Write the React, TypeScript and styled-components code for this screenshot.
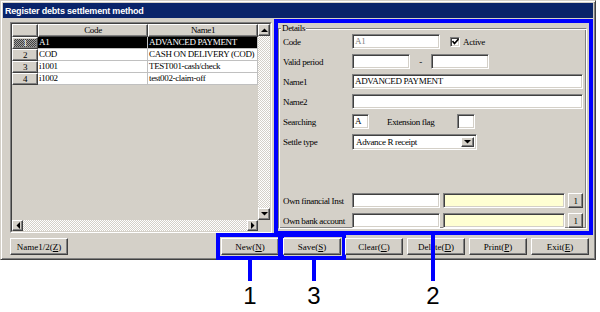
import React from 'react';
import styled, { createGlobalStyle, css } from 'styled-components';

const face = '#d4d0c8';

const GlobalStyle = createGlobalStyle`
	html, body {
		margin: 0;
		padding: 0;
		background: #ffffff;
	}
`;

const raised = css`
	border: 1px solid;
	border-color: #ffffff #404040 #404040 #ffffff;
	box-shadow: inset -1px -1px #808080, inset 1px 1px ${face};
`;

const sunken = css`
	border: 1px solid;
	border-color: #808080 #ffffff #ffffff #808080;
	box-shadow: inset 1px 1px #404040, inset -1px -1px ${face};
`;

const rows = [
	{ no: 1, code: 'A1', name: 'ADVANCED PAYMENT' },
	{ no: 2, code: 'COD', name: 'CASH ON DELIVERY (COD)' },
	{ no: 3, code: 'i1001', name: 'TEST001-cash/check' },
	{ no: 4, code: 'i1002', name: 'test002-claim-off' },
];

const actions = [
	{ label: 'New', key: 'N', marked: true },
	{ label: 'Save', key: 'S', marked: true },
	{ label: 'Clear', key: 'C', marked: false },
	{ label: 'Delete', key: 'D', marked: false },
	{ label: 'Print', key: 'P', marked: false },
	{ label: 'Exit', key: 'E', marked: false },
];

// annotation markers under the window: centre x, top of stem, stem length
const callouts = [
	{ n: '1', x: 250, top: 260, len: 21 },
	{ n: '3', x: 314, top: 260, len: 21 },
	{ n: '2', x: 433, top: 235, len: 46 },
];

function Arrow({ dir }: { dir: 'up' | 'down' | 'left' | 'right' }) {
	const points = {
		up: '0,4 7,4 3.5,0.5',
		down: '0,0 7,0 3.5,3.5',
		left: '4,0 4,7 0.5,3.5',
		right: '0,0 0,7 3.5,3.5',
	}[dir];
	const vertical = dir === 'up' || dir === 'down';
	return (
		<svg width={vertical ? 7 : 4} height={vertical ? 4 : 7}>
			<polygon points={points} fill="#000000" />
		</svg>
	);
}

function Field({ label, children, push }: { label: string; children: React.ReactNode; push?: boolean }) {
	return (
		<FormRow $push={push}>
			<Label>{label}</Label>
			{children}
		</FormRow>
	);
}

export default function App() {
	return (
		<Page>
			<GlobalStyle />
			<Window>
				<TitleBar>Register debts settlement method</TitleBar>
				<Body>
					<TopArea>
						<GridFrame>
							<GridInner>
								<GridMain>
									<Sheet>
										<SheetRow>
											<HeadCorner />
											<HeadCell>Code</HeadCell>
											<HeadCell>Name1</HeadCell>
										</SheetRow>
										{rows.map((r) => (
											<SheetRow key={r.no}>
												<RowHead $selected={r.no === 1}>{r.no}</RowHead>
												<DataCell $selected={r.no === 1}>{r.code}</DataCell>
												<DataCell $selected={r.no === 1}>{r.name}</DataCell>
											</SheetRow>
										))}
									</Sheet>
									<VScroll>
										<ScrollButton>
											<Arrow dir="up" />
										</ScrollButton>
										<Track />
										<ScrollButton>
											<Arrow dir="down" />
										</ScrollButton>
									</VScroll>
								</GridMain>
								<HScrollRow>
									<ScrollButton $narrow>
										<Arrow dir="left" />
									</ScrollButton>
									<Track />
									<ScrollButton $narrow>
										<Arrow dir="right" />
									</ScrollButton>
									<Corner />
								</HScrollRow>
							</GridInner>
						</GridFrame>

						<Panel>
							<GroupBox>
								<Legend>Details</Legend>
								<Field label="Code">
									<TextBox $w={88} $dim>
										A1
									</TextBox>
									<CheckGroup>
										<CheckBox>
											<svg width="7" height="7">
												<polyline points="0.5,3 2.5,5.5 6.5,1" fill="none" stroke="#000" strokeWidth="1.6" />
											</svg>
										</CheckBox>
										Active
									</CheckGroup>
								</Field>
								<Field label="Valid period">
									<TextBox $w={58} />
									<Dash>-</Dash>
									<TextBox $w={58} />
								</Field>
								<Field label="Name1">
									<TextBox $w={231}>ADVANCED PAYMENT</TextBox>
								</Field>
								<Field label="Name2">
									<TextBox $w={231} />
								</Field>
								<Field label="Searching">
									<TextBox $w={17}>A</TextBox>
									<InlineLabel>Extension flag</InlineLabel>
									<TextBox $w={18} />
								</Field>
								<Field label="Settle type">
									<Combo>
										<ComboText>Advance R receipt</ComboText>
										<DropButton>
											<Arrow dir="down" />
										</DropButton>
									</Combo>
								</Field>
								<Field label="Own financial Inst" push>
									<TextBox $w={88} />
									<TextBox $w={122} $yellow />
									<SmallButton>1</SmallButton>
								</Field>
								<Field label="Own bank account">
									<TextBox $w={88} />
									<TextBox $w={122} $yellow />
									<SmallButton>1</SmallButton>
								</Field>
							</GroupBox>
						</Panel>
					</TopArea>

					<ButtonRow>
						<Button>
							Name1/2(<u>Z</u>)
						</Button>
						<ActionGroup>
							{actions.map((a) => (
								<Button key={a.key} $marked={a.marked}>
									{a.label}(<u>{a.key}</u>)
								</Button>
							))}
						</ActionGroup>
					</ButtonRow>
				</Body>
			</Window>

			{callouts.map((c) => (
				<Callout key={c.n} $x={c.x} $top={c.top}>
					<Stem $len={c.len} />
					<Number>{c.n}</Number>
				</Callout>
			))}
		</Page>
	);
}

const Page = styled.div`
	position: relative;
	width: 600px;
	height: 312px;
	overflow: hidden;
	background: #ffffff;
	font-family: 'Liberation Serif', 'Times New Roman', serif;
	font-size: 9px;
	letter-spacing: -0.35px;
	color: #000000;
`;

const Window = styled.div`
	box-sizing: border-box;
	width: 596px;
	height: 260px;
	padding: 2px;
	display: flex;
	flex-direction: column;
	background: ${face};
	border: 1px solid;
	border-color: ${face} #404040 #404040 ${face};
	box-shadow: inset 1px 1px #ffffff, inset -1px -1px #808080;
`;

const TitleBar = styled.div`
	height: 15px;
	display: flex;
	align-items: center;
	padding-left: 2px;
	background: #0a246a;
	color: #ffffff;
	font-family: 'Liberation Sans', Arial, sans-serif;
	font-weight: bold;
	font-size: 9px;
	letter-spacing: -0.2px;
`;

const Body = styled.div`
	flex: 1;
	display: flex;
	flex-direction: column;
	padding: 4px 4px 2px 7px;
`;

const TopArea = styled.div`
	display: flex;
	gap: 6px;
	height: 211px;
`;

/* grid */

const GridFrame = styled.div`
	box-sizing: border-box;
	width: 262px;
	height: 211px;
	border: 1px solid;
	border-color: #808080 #ffffff #ffffff #808080;
`;

const GridInner = styled.div`
	box-sizing: border-box;
	height: 100%;
	display: flex;
	flex-direction: column;
	border: 1px solid;
	border-color: #404040 ${face} ${face} #404040;
`;

const GridMain = styled.div`
	flex: 1;
	display: flex;
	min-height: 0;
`;

const Sheet = styled.div`
	flex: 1;
	display: flex;
	flex-direction: column;
	background: ${face};
`;

const SheetRow = styled.div`
	display: flex;
`;

const HeadCorner = styled.div`
	box-sizing: border-box;
	width: 26px;
	height: 13px;
	background: ${face};
	${raised};
`;

const HeadCell = styled.div`
	box-sizing: border-box;
	width: 110px;
	height: 13px;
	line-height: 11px;
	text-align: center;
	background: ${face};
	${raised};
`;

const RowHead = styled.div<{ $selected?: boolean }>`
	box-sizing: border-box;
	width: 26px;
	height: 12px;
	line-height: 10px;
	text-align: center;
	${raised};
	background: ${(p) =>
		p.$selected
			? 'repeating-conic-gradient(#404040 0 25%, #a0a0a0 0 50%) 0 0 / 2px 2px'
			: face};
	color: ${(p) => (p.$selected ? '#ffffff' : '#000000')};
`;

const DataCell = styled.div<{ $selected?: boolean }>`
	box-sizing: border-box;
	width: 110px;
	height: 12px;
	line-height: 11px;
	padding-left: 1px;
	white-space: nowrap;
	overflow: hidden;
	border-right: 1px solid #c0c0c0;
	border-bottom: 1px solid #c0c0c0;
	background: ${(p) => (p.$selected ? '#000000' : '#ffffff')};
	color: ${(p) => (p.$selected ? '#ffffff' : '#000000')};
`;

const VScroll = styled.div`
	width: 12px;
	display: flex;
	flex-direction: column;
`;

const HScrollRow = styled.div`
	height: 11px;
	display: flex;
`;

const ScrollButton = styled.div<{ $narrow?: boolean }>`
	box-sizing: border-box;
	width: ${(p) => (p.$narrow ? 11 : 12)}px;
	height: ${(p) => (p.$narrow ? 11 : 12)}px;
	flex: none;
	display: flex;
	align-items: center;
	justify-content: center;
	background: ${face};
	${raised};
`;

const Track = styled.div`
	flex: 1;
	background: repeating-conic-gradient(#ffffff 0 25%, ${face} 0 50%) 0 0 / 2px 2px;
`;

const Corner = styled.div`
	width: 12px;
	flex: none;
	background: ${face};
`;

/* details panel */

const Panel = styled.div`
	box-sizing: border-box;
	width: 311px;
	height: 208px;
	margin-top: 1px;
	padding: 0 2px 2px 0;
	display: flex;
	outline: 4px solid #0000ff;
`;

const GroupBox = styled.fieldset`
	flex: 1;
	min-width: 0;
	margin: 0;
	padding: 1px 3px 0 4px;
	display: flex;
	flex-direction: column;
	gap: 5px;
	border: 1px solid;
	border-color: #808080 #ffffff #ffffff #808080;
	box-shadow: inset 1px 1px #ffffff, inset -1px -1px #808080;
`;

const Legend = styled.legend`
	padding: 0 1px;
	margin-left: -2px;
	font-size: 9px;
	line-height: 10px;
	background: ${face};
`;

const FormRow = styled.div<{ $push?: boolean }>`
	display: flex;
	align-items: center;
	height: 15px;
	gap: 3px;
	margin-top: ${(p) => (p.$push ? 'auto' : '0')};
`;

const Label = styled.div`
	width: 66px;
	flex: none;
	white-space: nowrap;
`;

const InlineLabel = styled.div`
	width: 67px;
	margin-left: 15px;
	white-space: nowrap;
`;

const TextBox = styled.div<{ $w: number; $yellow?: boolean; $dim?: boolean }>`
	box-sizing: border-box;
	width: ${(p) => p.$w}px;
	height: 15px;
	flex: none;
	padding: 0 2px;
	line-height: 13px;
	white-space: nowrap;
	overflow: hidden;
	${sunken};
	background: ${(p) => (p.$yellow ? '#ffffd2' : '#ffffff')};
	color: ${(p) => (p.$dim ? '#808080' : '#000000')};
`;

const CheckGroup = styled.div`
	display: flex;
	align-items: center;
	gap: 3px;
	margin-left: 7px;
`;

const CheckBox = styled.div`
	box-sizing: border-box;
	width: 10px;
	height: 10px;
	display: flex;
	align-items: center;
	justify-content: center;
	background: #ffffff;
	${sunken};
`;

const Dash = styled.div`
	width: 15px;
	text-align: center;
`;

const Combo = styled.div`
	box-sizing: border-box;
	width: 125px;
	height: 16px;
	display: flex;
	padding: 2px;
	background: #ffffff;
	${sunken};
`;

const ComboText = styled.div`
	flex: 1;
	line-height: 11px;
	padding-left: 1px;
`;

const DropButton = styled.div`
	box-sizing: border-box;
	width: 13px;
	display: flex;
	align-items: center;
	justify-content: center;
	background: ${face};
	${raised};
`;

const SmallButton = styled.div`
	box-sizing: border-box;
	width: 15px;
	height: 15px;
	flex: none;
	display: flex;
	align-items: center;
	justify-content: center;
	background: ${face};
	${raised};
`;

/* buttons */

const ButtonRow = styled.div`
	display: flex;
	justify-content: space-between;
	margin-top: 5px;
`;

const ActionGroup = styled.div`
	display: flex;
	gap: 4px;
`;

const Button = styled.button<{ $marked?: boolean }>`
	box-sizing: border-box;
	width: 58px;
	height: 17px;
	padding: 0;
	font: inherit;
	color: #000000;
	background: ${face};
	${raised};
	outline: ${(p) => (p.$marked ? '4px solid #0000ff' : 'none')};
	outline-offset: 1px;
`;

/* annotations */

const Callout = styled.div<{ $x: number; $top: number }>`
	position: absolute;
	left: ${(p) => p.$x - 10}px;
	top: ${(p) => p.$top}px;
	width: 20px;
	display: flex;
	flex-direction: column;
	align-items: center;
`;

const Stem = styled.div<{ $len: number }>`
	width: 4px;
	height: ${(p) => p.$len}px;
	background: #0000ff;
`;

const Number = styled.div`
	margin-top: 3px;
	font-family: 'Liberation Sans', Arial, sans-serif;
	font-size: 24px;
	line-height: 24px;
	letter-spacing: 0;
	color: #000000;
`;
